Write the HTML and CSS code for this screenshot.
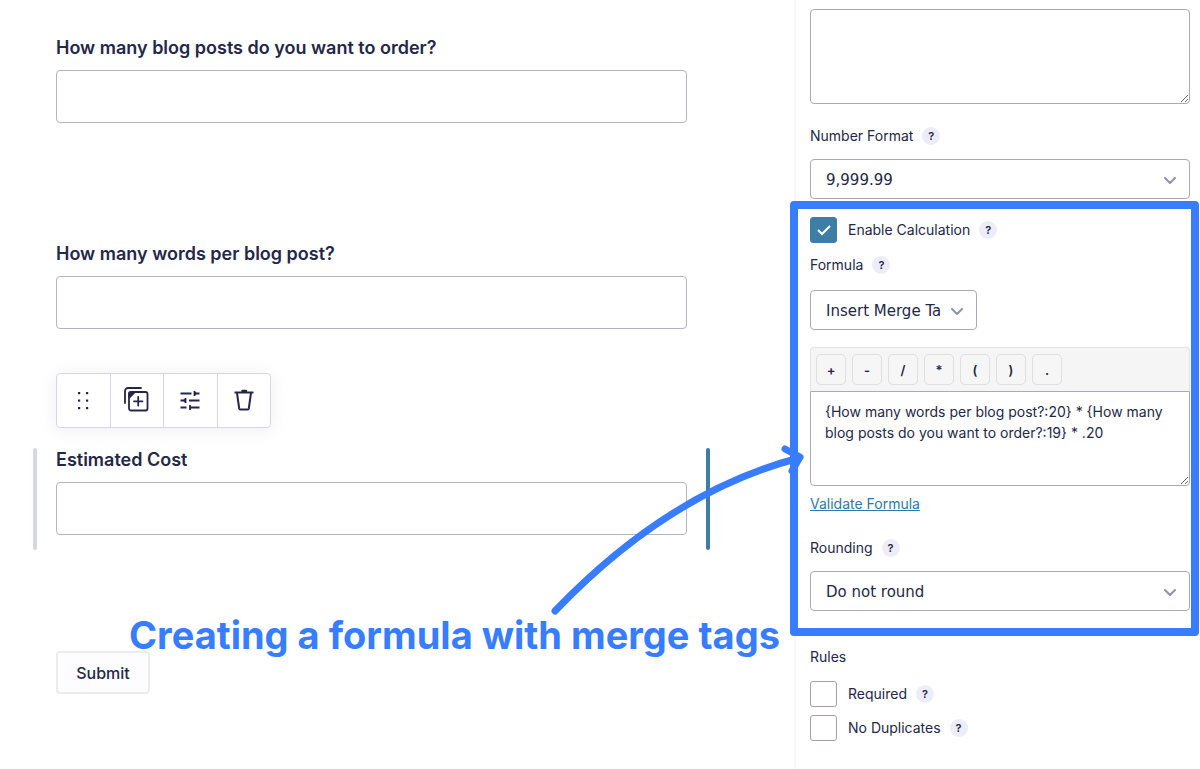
FILE: index.html
```html
<!DOCTYPE html>
<html lang="en">
<head>
    <meta charset="UTF-8">
    <meta name="viewport" content="width=device-width, initial-scale=1.0">
    <title>Form Editor</title>
    <link rel="stylesheet" href="styles.css">
</head>
<body>
    <div class="editor">

        <!-- Form preview -->
        <main class="preview">
            <div class="field">
                <label for="posts">How many blog posts do you want to order?</label>
                <input type="text" id="posts">
            </div>

            <div class="field">
                <label for="words">How many words per blog post?</label>
                <input type="text" id="words">
            </div>

            <div class="field-actions">
                <button type="button" aria-label="Move">
                    <svg width="26" height="26" viewBox="0 0 26 26" fill="currentColor">
                        <rect x="8" y="4" width="2.200" height="2.200"/><rect x="16" y="4" width="2.200" height="2.200"/>
                        <rect x="8" y="11.500" width="2.200" height="2.200"/><rect x="16" y="11.500" width="2.200" height="2.200"/>
                        <rect x="8" y="19" width="2.200" height="2.200"/><rect x="16" y="19" width="2.200" height="2.200"/>
                    </svg>
                </button>
                <button type="button" aria-label="Duplicate">
                    <svg width="26" height="26" viewBox="0 0 26 26" fill="none" stroke="currentColor" stroke-width="1.8" stroke-linecap="round" stroke-linejoin="round">
                        <rect x="5" y="4" width="18.500" height="18.500" rx="2"/>
                        <path d="M1 15V3a3 3 0 0 1 3-3h13"/>
                        <path d="M14.200 9v8.500M10 13.300h8.500"/>
                        <path d="M5.300 9.500V4.300h5.200z" fill="currentColor"/>
                    </svg>
                </button>
                <button type="button" aria-label="Settings">
                    <svg width="26" height="26" viewBox="0 0 26 26" fill="none" stroke="currentColor" stroke-width="1.8">
                        <path d="M3.500 5.500h11M17 5.500h5.500M17.500 3v5"/>
                        <path d="M3.500 12.500h5.500M12 12.500h10.500M8.500 10v5"/>
                        <path d="M3.500 19.500h6M12.500 19.500h10M13 17v5"/>
                        <path d="M17.500 3.500l3 2l-3 2zM8.500 10.500l-3 2l3 2z" fill="currentColor" stroke="none"/>
                    </svg>
                </button>
                <button type="button" aria-label="Delete">
                    <svg width="26" height="26" viewBox="0 0 26 26" fill="none" stroke="currentColor" stroke-width="2" stroke-linejoin="round">
                        <path d="M3.500 4.500h19"/>
                        <path d="M6 5l2.200 15.500q.2 1 1.200 1h7.200q1 0 1.200-1L20 5"/>
                        <path d="M11.500 3h3.500" stroke-width="2.500" stroke-linecap="round"/>
                    </svg>
                </button>
            </div>

            <div class="field selected">
                <label for="cost">Estimated Cost</label>
                <input type="text" id="cost">
            </div>

            <button type="button" class="submit">Submit</button>
        </main>

        <!-- Field settings -->
        <aside class="settings">
            <textarea class="description" aria-label="Description"></textarea>

            <div class="setting-label">
                <label for="number-format">Number Format</label>
                <button type="button" class="tip">?</button>
            </div>
            <select id="number-format">
                <option>9,999.99</option>
            </select>

            <section class="calculation">
                <div class="check-row">
                    <input type="checkbox" id="enable-calc" checked>
                    <label for="enable-calc">Enable Calculation</label>
                    <button type="button" class="tip">?</button>
                </div>

                <div class="setting-label formula-label">
                    <label for="formula">Formula</label>
                    <button type="button" class="tip">?</button>
                </div>
                <select class="merge-tag" aria-label="Insert Merge Tag">
                    <option>Insert Merge Tag</option>
                </select>

                <div class="operators">
                    <button type="button">+</button>
                    <button type="button">-</button>
                    <button type="button">/</button>
                    <button type="button">*</button>
                    <button type="button">(</button>
                    <button type="button">)</button>
                    <button type="button">.</button>
                </div>
                <textarea id="formula" class="formula" spellcheck="false">{How many words per blog post?:20} * {How many blog posts do you want to order?:19} * .20</textarea>
                <a href="#" class="validate">Validate Formula</a>

                <div class="setting-label">
                    <label for="rounding">Rounding</label>
                    <button type="button" class="tip">?</button>
                </div>
                <select id="rounding">
                    <option>Do not round</option>
                </select>
            </section>

            <fieldset class="rules">
                <legend>Rules</legend>
                <div class="check-row">
                    <input type="checkbox" id="required">
                    <label for="required">Required</label>
                    <button type="button" class="tip">?</button>
                </div>
                <div class="check-row">
                    <input type="checkbox" id="no-duplicates">
                    <label for="no-duplicates">No Duplicates</label>
                    <button type="button" class="tip">?</button>
                </div>
            </fieldset>
        </aside>

        <!-- Callout -->
        <p class="callout">Creating a formula with merge tags</p>
        <svg class="arrow" width="260" height="180" viewBox="0 0 260 180" fill="none" stroke="currentColor" stroke-width="7" stroke-linecap="round" stroke-linejoin="round">
            <path d="M10 171Q124 52 254 18"/>
            <path d="M240 9L255 17L247 31"/>
        </svg>
    </div>
</body>
</html>
```

FILE: styles.css
```css
* { box-sizing: border-box; }
body { margin: 0; font-family: Inter, "Liberation Sans", sans-serif; color: #242748; background: #fff; }
input, textarea, select, button { font-family: inherit; color: inherit; margin: 0; }

.editor { position: relative; display: flex; min-height: 100vh; }

/* Form preview */
.preview { flex: 1; padding: 36px 84px 0 33px; }
.field { padding: 0 19px 15px; border: solid transparent; border-width: 0 4px; margin-bottom: 104px; }
.field label { display: block; font-size: 18px; line-height: 24px; font-weight: 600; margin-bottom: 10px; }
.field input { display: block; width: 100%; height: 53px; padding: 0 12px; font-size: 16px; border: 1px solid #b3b3c4; border-radius: 4px; background: #fff; }
.field.selected { position: relative; border: none; padding: 0 23px 15px; margin-bottom: 101px; }
.field.selected::before, .field.selected::after { content: ""; position: absolute; top: 0; bottom: 0; width: 4px; border-radius: 2px; background: #d5d7e9; left: 0; }
.field.selected::after { left: auto; right: 0; background: #3e7da6; }

.field-actions { display: flex; width: 215px; height: 55px; margin: -75px 0 20px 23px; border: 1px solid #d5d7e9; border-radius: 4px; background: #fff; box-shadow: 0 2px 16px rgba(36, 39, 72, 0.08); }
.field-actions button { flex: 1; display: flex; align-items: center; justify-content: center; padding: 0; border: none; border-left: 1px solid #d5d7e9; background: none; cursor: pointer; }
.field-actions button:first-child { border-left: none; }
.field-actions svg { overflow: visible; }

.submit { width: 94px; height: 43px; margin-left: 23px; padding: 0; font-size: 16px; font-weight: 500; border: 2px solid #ebebf2; border-radius: 4px; background: #fdfdff; cursor: pointer; }

/* Field settings */
.settings { width: 406px; padding: 9px 10px 0 14px; border-left: 2px solid #f6f6fa; font-size: 14px; }
.settings textarea { display: block; width: 100%; height: 95px; border: 1px solid #a9a9bb; border-radius: 4px; background: #fff; }
.setting-label, .check-row { display: flex; align-items: center; gap: 9px; }
.setting-label { height: 22px; margin: 21px 0 12px; }
.setting-label label, .check-row label { padding-bottom: 2px; }
.tip { width: 18px; height: 18px; padding: 0; border: none; border-radius: 50%; background: #ecedf8; font-size: 11px; line-height: 18px; font-weight: 600; }

.settings select { display: block; width: 100%; height: 40px; padding: 2px 36px 0 15px; font-family: "DejaVu Sans", sans-serif; font-size: 15px; border: 1px solid #a9a9bb; border-radius: 4px; appearance: none; background: #fff url("data:image/svg+xml,%3Csvg xmlns='http://www.w3.org/2000/svg' width='12' height='8' fill='none' stroke='%239092b2' stroke-width='2' stroke-linecap='round' stroke-linejoin='round'%3E%3Cpath d='M1 1l5 5 5-5'/%3E%3C/svg%3E") no-repeat right 13px top 17px; }
.settings .merge-tag { width: 167px; }

.check-row { height: 26px; }
.check-row input { appearance: none; width: 27px; height: 26px; margin-right: 2px; border: 1px solid #a0a0b4; border-radius: 3px; background: #fff; }
.check-row input:checked { border-color: #3e7da6; background: #3e7da6 url("data:image/svg+xml,%3Csvg xmlns='http://www.w3.org/2000/svg' width='14' height='11' fill='none' stroke='white' stroke-width='2'%3E%3Cpath d='M1 5l4 4 8-8'/%3E%3C/svg%3E") no-repeat center; }

.calculation { position: relative; margin-top: 18px; }
.calculation::after { content: ""; position: absolute; top: -16px; bottom: -25px; left: -20px; right: -9px; border: 8px solid #387dff; border-radius: 4px; pointer-events: none; }
.calculation .formula-label { margin: 11px 0 14px; }

.operators { display: flex; gap: 6px; height: 44px; margin-top: 17px; padding: 6px 5px; border: 1px solid #e4e4e8; border-bottom: none; border-radius: 4px 4px 0 0; background: #f5f5f5; }
.operators button { width: 30px; height: 31px; padding: 0; border: 1px solid #dedee3; border-radius: 5px; background: #f6f6f6; font-size: 13px; font-weight: 600; }
.settings .formula { padding: 9px 14px; border-radius: 0 0 4px 4px; font-size: 14px; line-height: 21px; }
.validate { display: block; margin: 8px 0 23px; line-height: 20px; color: #2c7aa8; }

.rules { margin: 35px 0 0; padding: 0; border: none; }
.rules legend { padding: 0; line-height: 22px; margin-bottom: 13px; }
.rules .check-row + .check-row { margin-top: 8px; }

/* Callout */
.callout { position: absolute; top: 610px; left: 129px; margin: 0; font-size: 38px; line-height: 50px; font-weight: 700; white-space: nowrap; color: #387dff; }
.arrow { position: absolute; top: 440px; left: 545px; color: #387dff; pointer-events: none; }
```
